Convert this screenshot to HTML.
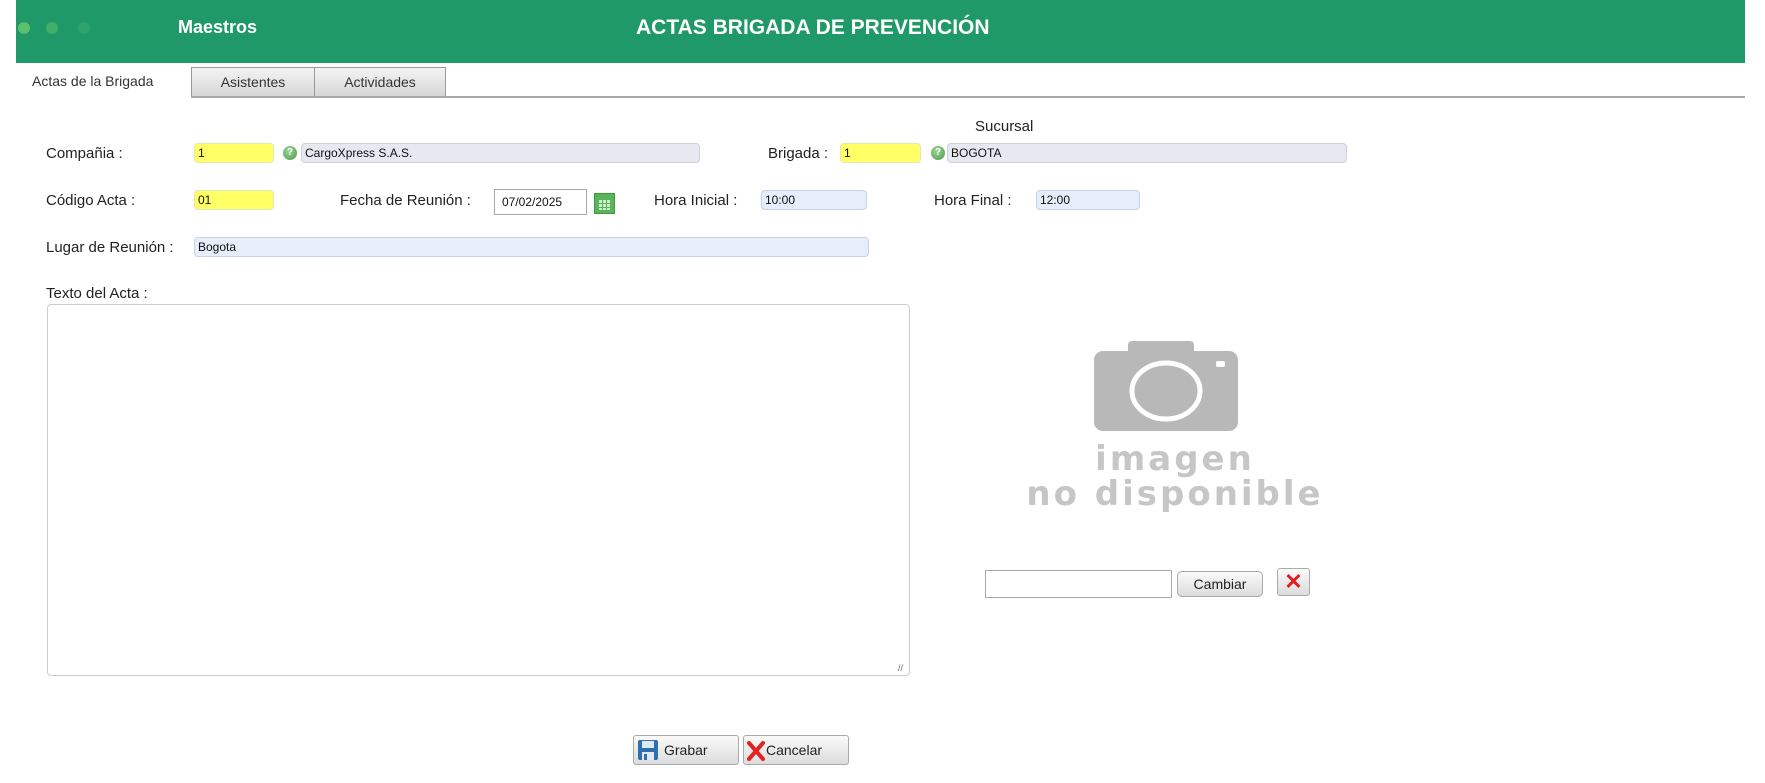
<!DOCTYPE html>
<html><head><meta charset="utf-8"><style>
*{box-sizing:border-box}
body{margin:0;width:1765px;height:783px;background:#fff;position:relative;overflow:hidden;font-family:"Liberation Sans",sans-serif;color:#222}
.a{position:absolute}
.bar{left:16px;top:0;width:1729px;height:63px;background:#1f9968}
.lbl{font-size:15px;color:#222;line-height:18px}
.in{position:absolute;height:20px;border:1px solid #ccd;border-radius:4px;font-size:12px;line-height:18px;padding-left:3px;font-family:"Liberation Sans",sans-serif;color:#111}
.y{background:#ffff66;border-color:#e6e6b0}
.g{background:#e8e8f0;border-color:#cfd0d8}
.b{background:#e6eefc;border-color:#c8d2e6}
.ic{position:absolute;width:14px;height:14px;border-radius:50%;background:radial-gradient(circle at 40% 35%,#9fd49a,#4a9a4a);color:#fff;font-size:10px;font-weight:bold;text-align:center;line-height:14px}
.tab{position:absolute;top:67px;height:30px;font-size:14px;text-align:center;line-height:28px;color:#333}
.tb{background:linear-gradient(#f4f4f4,#d6d6d6);border:1px solid #999}
.btn{position:absolute;border:1px solid #aaa;border-radius:3px;background:linear-gradient(#fafafa,#dcdcdc);font-size:14px;color:#222}
</style></head><body>
<div class="a bar"></div>
<div class="a" style="left:18px;top:22px;width:12px;height:12px;border-radius:50%;background:#5bbf6e"></div>
<div class="a" style="left:46px;top:22px;width:12px;height:12px;border-radius:50%;background:#43ad6a"></div>
<div class="a" style="left:78px;top:22px;width:12px;height:12px;border-radius:50%;background:#2fa46a"></div>
<div class="a" style="left:178px;top:17px;color:#fff;font-weight:bold;font-size:18px">Maestros</div>
<div class="a" style="left:636px;top:16px;color:#fff;font-weight:bold;font-size:21px">ACTAS BRIGADA DE PREVENCIÓN</div>

<div class="tab" style="left:18px;width:173px;background:#fff;text-align:left;padding-left:14px">Actas de la Brigada</div>
<div class="tab tb" style="left:191px;width:124px">Asistentes</div>
<div class="tab tb" style="left:314px;width:132px">Actividades</div>
<div class="a" style="left:191px;top:96px;width:1554px;height:2px;background:#a8a8a8"></div>

<div class="a lbl" style="left:975px;top:118px">Sucursal</div>

<div class="a lbl" style="left:46px;top:145px">Compañia :</div>
<div class="in y" style="left:194px;top:143px;width:80px">1</div>
<div class="ic" style="left:283px;top:146px">?</div>
<div class="in g" style="left:301px;top:143px;width:399px">CargoXpress S.A.S.</div>
<div class="a lbl" style="left:768px;top:145px">Brigada :</div>
<div class="in y" style="left:840px;top:143px;width:81px">1</div>
<div class="ic" style="left:931px;top:146px">?</div>
<div class="in g" style="left:947px;top:143px;width:400px">BOGOTA</div>

<div class="a lbl" style="left:46px;top:192px">Código Acta :</div>
<div class="in y" style="left:194px;top:190px;width:80px">01</div>
<div class="a lbl" style="left:340px;top:192px">Fecha de Reunión :</div>
<div class="in" style="left:494px;top:189px;width:93px;height:26px;border-radius:0;border-color:#aaa;line-height:24px;padding-left:7px">07/02/2025</div>
<div class="a" style="left:594px;top:193px;width:21px;height:21px;background:#5ab55a;border:1px solid #3e9a3e"></div>
<div class="a" style="left:598px;top:199px;width:13px;height:11px;background:#cfeccf;background-image:linear-gradient(#5ab55a 1px,transparent 1px),linear-gradient(90deg,#5ab55a 1px,transparent 1px);background-size:4px 4px"></div>
<div class="a lbl" style="left:654px;top:192px">Hora Inicial :</div>
<div class="in b" style="left:761px;top:190px;width:106px">10:00</div>
<div class="a lbl" style="left:934px;top:192px">Hora Final :</div>
<div class="in b" style="left:1036px;top:190px;width:104px">12:00</div>

<div class="a lbl" style="left:46px;top:239px">Lugar de Reunión :</div>
<div class="in b" style="left:194px;top:237px;width:675px">Bogota</div>

<div class="a lbl" style="left:46px;top:285px">Texto del Acta :</div>
<div class="a" style="left:47px;top:304px;width:863px;height:372px;border:1px solid #ccc;border-radius:4px"></div>
<div class="a" style="left:898px;top:663px;font-size:9px;color:#666">//</div>

<svg class="a" style="left:1094px;top:341px" width="144" height="90" viewBox="0 0 144 90">
<rect x="34" y="0" width="66" height="14" rx="4" fill="#b8b8b8"/>
<rect x="0" y="10" width="144" height="80" rx="9" fill="#b8b8b8"/>
<ellipse cx="72" cy="50" rx="34" ry="28" fill="none" stroke="#fff" stroke-width="5"/>
<rect x="122" y="20" width="9" height="6" rx="2" fill="#fff"/>
</svg>
<div class="a" style="left:972px;top:442px;width:406px;text-align:center;font-family:'DejaVu Sans',sans-serif;font-weight:bold;font-size:34px;line-height:35px;color:#c6c6c6;letter-spacing:3px">imagen<br>no disponible</div>

<div class="a" style="left:985px;top:570px;width:187px;height:28px;border:1px solid #aaa;background:#fff"></div>
<div class="btn" style="left:1177px;top:571px;width:86px;height:26px;border-radius:5px;text-align:center;line-height:24px">Cambiar</div>
<div class="btn" style="left:1277px;top:568px;width:33px;height:28px;text-align:center;line-height:26px;color:#e02020;font-size:22px;font-weight:bold">✕</div>

<div class="btn" style="left:633px;top:735px;width:106px;height:30px;line-height:28px;padding-left:30px">Grabar</div>
<svg class="a" style="left:637px;top:739px" width="22" height="22" viewBox="0 0 22 22"><rect x="1" y="1" width="20" height="20" rx="2" fill="#2f6fae"/><rect x="5" y="2" width="12" height="7" fill="#dfe9f5"/><rect x="5" y="13" width="12" height="8" fill="#dfe9f5"/><rect x="7" y="15" width="3" height="6" fill="#2f6fae"/></svg>
<div class="btn" style="left:743px;top:735px;width:106px;height:30px;line-height:28px;padding-left:22px">Cancelar</div>
<svg class="a" style="left:747px;top:741px" width="18" height="20" viewBox="0 0 18 20"><path d="M2 2 L16 18 M16 2 L2 18" stroke="#e42020" stroke-width="4" stroke-linecap="round"/></svg>
</body></html>
